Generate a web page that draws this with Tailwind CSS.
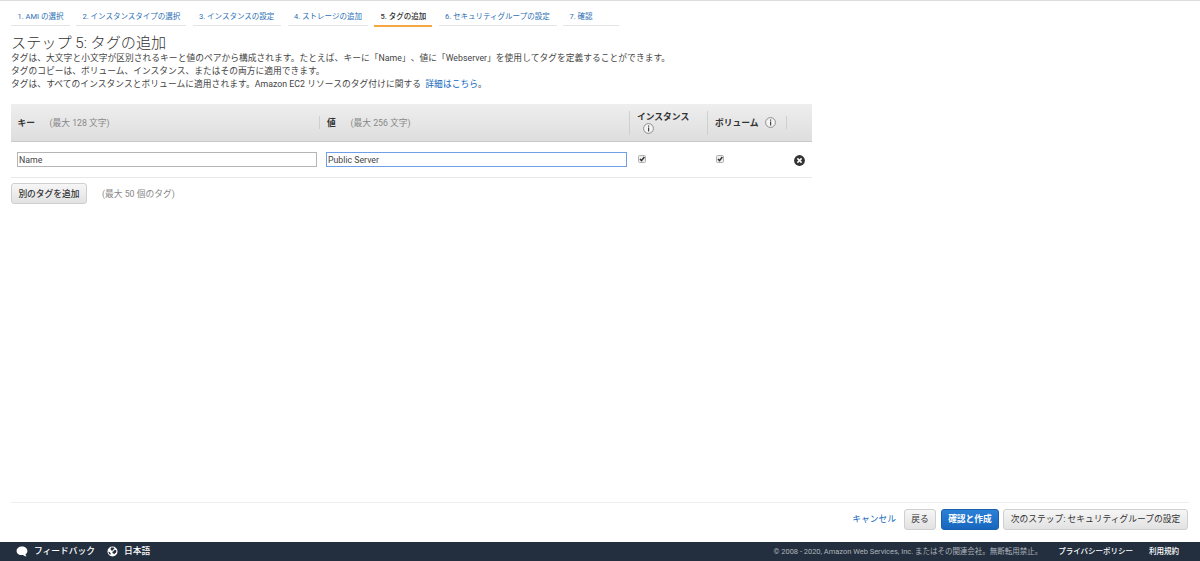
<!DOCTYPE html>
<html lang="ja">
<head>
  <meta charset="UTF-8">
  <meta name="viewport" content="width=device-width, initial-scale=1.0">
  <title>ステップ 5: タグの追加</title>
  <script src="https://cdn.jsdelivr.net/npm/@tailwindcss/browser@4"></script>
</head>
<body class="h-screen flex flex-col overflow-hidden bg-white border-t border-[#dcdcdc] font-['Roboto','Noto_Sans_CJK_JP',sans-serif] text-[8.75px] leading-[13px] text-[#444] whitespace-nowrap [text-spacing-trim:space-all]">

  <!-- wizard steps -->
  <nav class="flex gap-[6.5px] ml-[11px] h-[25px] shrink-0 pt-1.5 text-[7.5px] leading-[19px] text-[#2a6fb5]">
    <a class="w-[58.5px] pl-[6.5px] border-b border-[#e4e4e4]">1. AMI の選択</a>
    <a class="w-[110px] pl-[6.5px] border-b border-[#e4e4e4]">2. インスタンスタイプの選択</a>
    <a class="w-[88.5px] pl-[6.5px] border-b border-[#e4e4e4]">3. インスタンスの設定</a>
    <a class="w-[80px] pl-[6.5px] border-b border-[#e4e4e4]">4. ストレージの追加</a>
    <a class="w-[58px] h-5 pl-[6.5px] border-b-2 border-[#f5a742] text-[#333] font-medium">5. タグの追加</a>
    <a class="w-[118px] pl-[6.5px] border-b border-[#e4e4e4]">6. セキュリティグループの設定</a>
    <a class="w-[56px] pl-[6.5px] border-b border-[#e4e4e4]">7. 確認</a>
  </nav>

  <main class="grow pl-[11px]">
    <h1 class="mt-2 h-[18px] text-[15.15px] leading-[18px] font-light text-[#333]">ステップ 5: タグの追加</h1>
    <p class="tracking-[0.02px]">タグは、大文字と小文字が区別されるキーと値のペアから構成されます。たとえば、キーに「Name」、値に「Webserver」を使用してタグを定義することができます。</p>
    <p>タグのコピーは、ボリューム、インスタンス、またはその両方に適用できます。</p>
    <p class="tracking-[0.04px]">タグは、すべてのインスタンスとボリュームに適用されます。Amazon EC2 リソースのタグ付けに関する <a class="ml-0.5 text-[#1166bb]">詳細はこちら</a>。</p>

    <!-- tag table -->
    <div class="mt-[13px] w-[801px]">
      <div class="flex items-center h-[38px] bg-linear-to-b from-[#eeeeee] to-[#dedede] border-b border-[#c8c8c8] font-bold text-[#333]">
        <div class="w-[308px] pl-[6.5px] flex leading-[14px]"><span class="w-8">キー</span><span class="font-normal text-[#888]">(最大 128 文字)</span></div>
        <div class="w-[310px] h-[13px] pl-[7px] flex border-l border-[#cfcfcf] leading-[14px]"><span class="w-[23.5px]">値</span><span class="font-normal text-[#888]">(最大 256 文字)</span></div>
        <div class="w-[78px] h-6 pl-[7px] border-l border-[#cfcfcf] leading-[11px]">
          <div class="pt-px">インスタンス</div>
          <svg class="ml-1.5 size-[11px]" viewBox="0 0 11 11"><circle cx="5.5" cy="5.5" r="4.9" fill="#f4f4f4" stroke="#777" stroke-width=".8"/><path d="M5 2.6h1.2v1.1H5zM5 4.6h1.2v3.8H5z" fill="#444"/></svg>
        </div>
        <div class="w-[79px] h-6 pl-[7px] flex items-center border-l border-[#cfcfcf]">
          <span class="pt-px">ボリューム</span>
          <svg class="ml-1.5 size-[11px]" viewBox="0 0 11 11"><circle cx="5.5" cy="5.5" r="4.9" fill="#f4f4f4" stroke="#777" stroke-width=".8"/><path d="M5 2.6h1.2v1.1H5zM5 4.6h1.2v3.8H5z" fill="#444"/></svg>
        </div>
        <div class="h-[13px] border-l border-[#cfcfcf]"></div>
      </div>
      <div class="flex items-center h-[36px] border-b border-[#e8e8e8]">
        <div class="ml-1.5 w-[300px] h-[15px] pl-px leading-[14px] border border-[#b5b5b5]">Name</div>
        <div class="ml-[9px] w-[301px] h-[15px] pl-px leading-[14px] border border-[#6f9fe6]">Public Server</div>
        <svg class="ml-[11px] -mt-px size-2" viewBox="0 0 8 8"><rect x=".5" y=".5" width="7" height="7" rx="1" fill="#eee" stroke="#b0b0b0"/><path d="M2 4l1.5 1.6L6.4 2" fill="none" stroke="#333" stroke-width="1.5"/></svg>
        <svg class="ml-[70px] -mt-px size-2" viewBox="0 0 8 8"><rect x=".5" y=".5" width="7" height="7" rx="1" fill="#eee" stroke="#b0b0b0"/><path d="M2 4l1.5 1.6L6.4 2" fill="none" stroke="#333" stroke-width="1.5"/></svg>
        <svg class="ml-[70px] mt-px size-[11px]" viewBox="0 0 11 11"><circle cx="5.5" cy="5.5" r="5.4" fill="#333"/><path d="M3.4 3.4l4.2 4.2M7.6 3.4L3.4 7.6" stroke="#fff" stroke-width="1.5"/></svg>
      </div>
    </div>

    <div class="mt-[5px] flex items-center gap-[15px]">
      <button class="w-[76px] h-[21px] pt-px rounded-[3px] border border-[#cfcfcf] bg-linear-to-b from-[#f6f6f6] to-[#e2e2e2] font-medium text-[#333]">別のタグを追加</button>
      <span class="pt-px text-[#888]">(最大 50 個のタグ)</span>
    </div>
  </main>

  <!-- actions -->
  <div class="flex items-start justify-end h-[40px] shrink-0 mx-[11px] pt-1.5 pr-px border-t border-[#eee]">
    <a class="mr-2 leading-[21px] text-[#1166bb]">キャンセル</a>
    <button class="mr-[5px] w-8 h-[21px] rounded-[3px] border border-[#cfcfcf] bg-linear-to-b from-[#f6f6f6] to-[#e2e2e2] text-[#333]">戻る</button>
    <button class="mr-1 w-[58px] h-[21px] rounded-[3px] border border-[#1a5fae] bg-linear-to-b from-[#2b80d8] to-[#1766bd] font-bold text-white">確認と作成</button>
    <button class="w-[185px] h-[21px] rounded-[3px] border border-[#cfcfcf] bg-linear-to-b from-[#f6f6f6] to-[#e2e2e2] text-[#333]">次のステップ: セキュリティグループの設定</button>
  </div>

  <footer class="flex items-center h-[19px] shrink-0 pl-4 pr-[21px] bg-[#232f3e] text-white font-medium">
    <svg class="mr-1.5 w-3 h-[11px]" viewBox="0 0 12 11"><path d="M6 .6C2.9.6.6 2.5.6 4.9s2.3 4.2 5.4 4.2l1-.1c1 .9 2.2 1.4 3.7 1.3-.7-.6-1.1-1.3-1.2-2.1 1.2-.8 1.9-1.9 1.9-3.3C11.4 2.5 9.1.6 6 .6z" fill="#fff"/></svg>
    <span>フィードバック</span>
    <svg class="ml-3 mr-1.5 size-[11px]" viewBox="0 0 11 11"><circle cx="5.5" cy="5.5" r="5" fill="#fff"/><path d="M4 1.4l2.6.1 1 1-1.3.6.1 1.1-1.7.5-1.2-1.5zM7.8 3.4l1.6 1-.3 2.1-1.8 1.6-1.6-.9-.4-1.3 1.5-.8zM1.4 5.6l1.7.9.8 1.6-.9.6-1.3-1.5z" fill="#232f3e"/></svg>
    <span>日本語</span>
    <div class="ml-auto flex text-[7.5px]">
      <span class="mr-4 font-normal text-[#aeb4bb] tracking-[-0.02px]">© 2008 - 2020, Amazon Web Services, Inc. またはその関連会社。無断転用禁止。</span>
      <span class="mr-4">プライバシーポリシー</span>
      <span>利用規約</span>
    </div>
  </footer>
</body>
</html>
